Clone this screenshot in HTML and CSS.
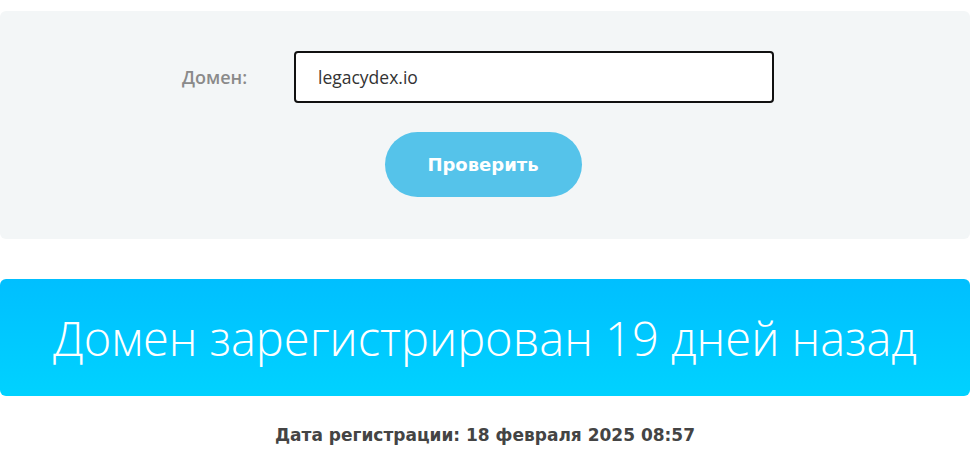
FILE: index.html
```html
<!DOCTYPE html>
<html lang="ru">
<head>
    <meta charset="UTF-8">
    <meta name="viewport" content="width=device-width, initial-scale=1.0">
    <title>Проверка возраста домена</title>
    <link rel="stylesheet" href="styles.css">
</head>
<body>
    <div class="page">
        <form class="check-form">
            <div class="form-row">
                <label class="form-label" for="domain">Домен:</label>
                <input class="form-input" id="domain" type="text" value="legacydex.io">
            </div>
            <button class="check-btn" type="button">Проверить</button>
        </form>

        <div class="result-banner">Домен зарегистрирован 19 дней назад</div>

        <p class="reg-date">Дата регистрации: 18 февраля 2025 08:57</p>
    </div>
</body>
</html>
```

FILE: styles.css
```css
body {
    margin: 0;
    font-family: "Open Sans", Arial, sans-serif;
    background: #ffffff;
    color: #333333;
}

.page {
    width: 970px;
    padding-top: 11px;
}

.check-form {
    background: #f3f6f7;
    border-radius: 6px;
    height: 228px;
    box-sizing: border-box;
    padding-top: 40px;
    display: flex;
    flex-direction: column;
    align-items: center;
}

.form-row {
    display: flex;
    align-items: center;
    margin-right: 14px;
}

.form-label {
    width: 112px;
    color: #8a8a8a;
    font-weight: 600;
    font-size: 18px;
}

.form-input {
    width: 480px;
    height: 52px;
    box-sizing: border-box;
    border: 2px solid #111111;
    border-radius: 4px;
    padding: 0 22px;
    font-family: inherit;
    font-size: 17.5px;
    color: #333333;
    background: #ffffff;
    outline: none;
}

.check-btn {
    margin: 29px 4px 0 0;
    width: 197px;
    height: 65px;
    border: none;
    border-radius: 33px;
    background: #55c3ea;
    color: #ffffff;
    font-family: "DejaVu Sans", sans-serif;
    font-size: 18px;
    font-weight: 700;
    cursor: pointer;
}

.result-banner {
    margin-top: 40px;
    height: 117px;
    border-radius: 6px;
    background: linear-gradient(to bottom, #00bfff, #00d2ff);
    color: #ffffff;
    font-size: 47px;
    font-weight: 300;
    display: flex;
    align-items: center;
    justify-content: center;
}

.reg-date {
    margin: 29px 0 0;
    text-align: center;
    font-family: "DejaVu Sans", sans-serif;
    font-size: 17px;
    font-weight: 700;
    color: #444444;
}
```
